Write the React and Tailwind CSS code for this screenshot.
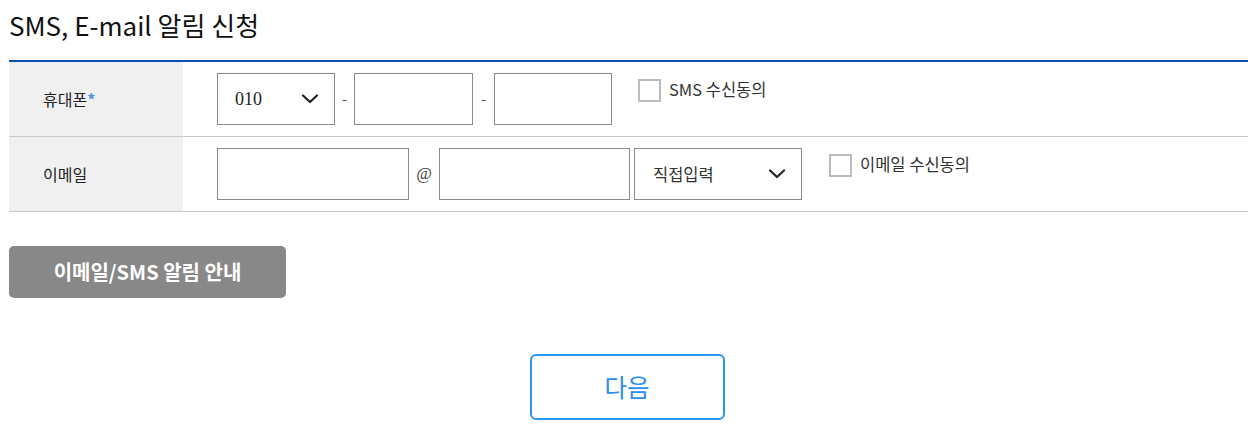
import React from "react";

const font = { fontFamily: '"Noto Sans CJK KR", "Noto Sans", sans-serif' };

const Chevron = () => (
  <svg width="18" height="10" viewBox="0 0 18 10" fill="none">
    <path d="M2 1.5 L9 8 L16 1.5" stroke="#222" strokeWidth="2.2" strokeLinecap="round" strokeLinejoin="round" />
  </svg>
);

const Check = ({ label }) => (
  <label className="flex items-center gap-[8px] mt-[6px] text-[16.5px] text-[#333]">
    <span className="w-[23px] h-[23px] border-2 border-[#bbbbbb] bg-white" />
    <span className="leading-none -mt-[3px]">{label}</span>
  </label>
);

const Box = ({ w }) => <div className={`h-[52px] border border-[#8a8a8a] bg-white ${w}`} />;

export default function App() {
  return (
    <div className="w-[1257px] h-[448px] bg-white text-[#222] px-[9px] pt-[6px] overflow-hidden" style={font}>
      <h1 className="text-[26px] font-normal leading-[38px] text-[#111]">SMS, E-mail 알림 신청</h1>

      <div className="mt-[16px] border-t-2 border-[#0b4fb0]">
        <div className="flex h-[75px] border-b border-[#c8c8c8]">
          <div className="w-[174px] bg-[#f0f0f0] flex items-center pl-[34px] text-[16px] text-[#222]">
            휴대폰<span className="text-[#4a94ec] font-bold">*</span>
          </div>
          <div className="flex items-start pt-[11px] pl-[34px]">
            <div className="w-[118px] h-[52px] border border-[#8a8a8a] flex items-center justify-between pl-[17px] pr-[15px]">
              <span className="text-[18px] text-[#222]" style={{ fontFamily: '"Liberation Serif", serif' }}>010</span>
              <Chevron />
            </div>
            <span className="w-[19px] h-[52px] flex items-center justify-center text-[15px] text-[#555]">-</span>
            <Box w="w-[119px]" />
            <span className="w-[21px] h-[52px] flex items-center justify-center text-[15px] text-[#555]">-</span>
            <Box w="w-[118px]" />
            <div className="ml-[26px]">
              <Check label="SMS 수신동의" />
            </div>
          </div>
        </div>

        <div className="flex h-[75px] border-b border-[#c8c8c8]">
          <div className="w-[174px] bg-[#f0f0f0] flex items-center pl-[34px] text-[16px] text-[#222]">이메일</div>
          <div className="flex items-start pt-[11px] pl-[34px]">
            <Box w="w-[192px]" />
            <span className="w-[30px] h-[52px] flex items-center justify-center text-[17px] text-[#444]" style={{ fontFamily: '"Liberation Serif", serif' }}>@</span>
            <Box w="w-[191px]" />
            <div className="ml-[4px] w-[168px] h-[52px] border border-[#8a8a8a] flex items-center justify-between pl-[18px] pr-[15px]">
              <span className="text-[16.5px] text-[#333]">직접입력</span>
              <Chevron />
            </div>
            <div className="ml-[27px]">
              <Check label="이메일 수신동의" />
            </div>
          </div>
        </div>
      </div>

      <button className="mt-[34px] w-[277px] h-[52px] rounded-[5px] bg-[#888888] text-white text-[20px] font-bold flex items-center justify-center">
        이메일/SMS 알림 안내
      </button>

      <div className="flex justify-center mt-[56px] pr-[3px]">
        <button className="w-[195px] h-[66px] rounded-[6px] border-2 border-[#2b95f2] bg-white text-[#2b8ef0] text-[24.5px] flex items-center justify-center">
          다음
        </button>
      </div>
    </div>
  );
}
